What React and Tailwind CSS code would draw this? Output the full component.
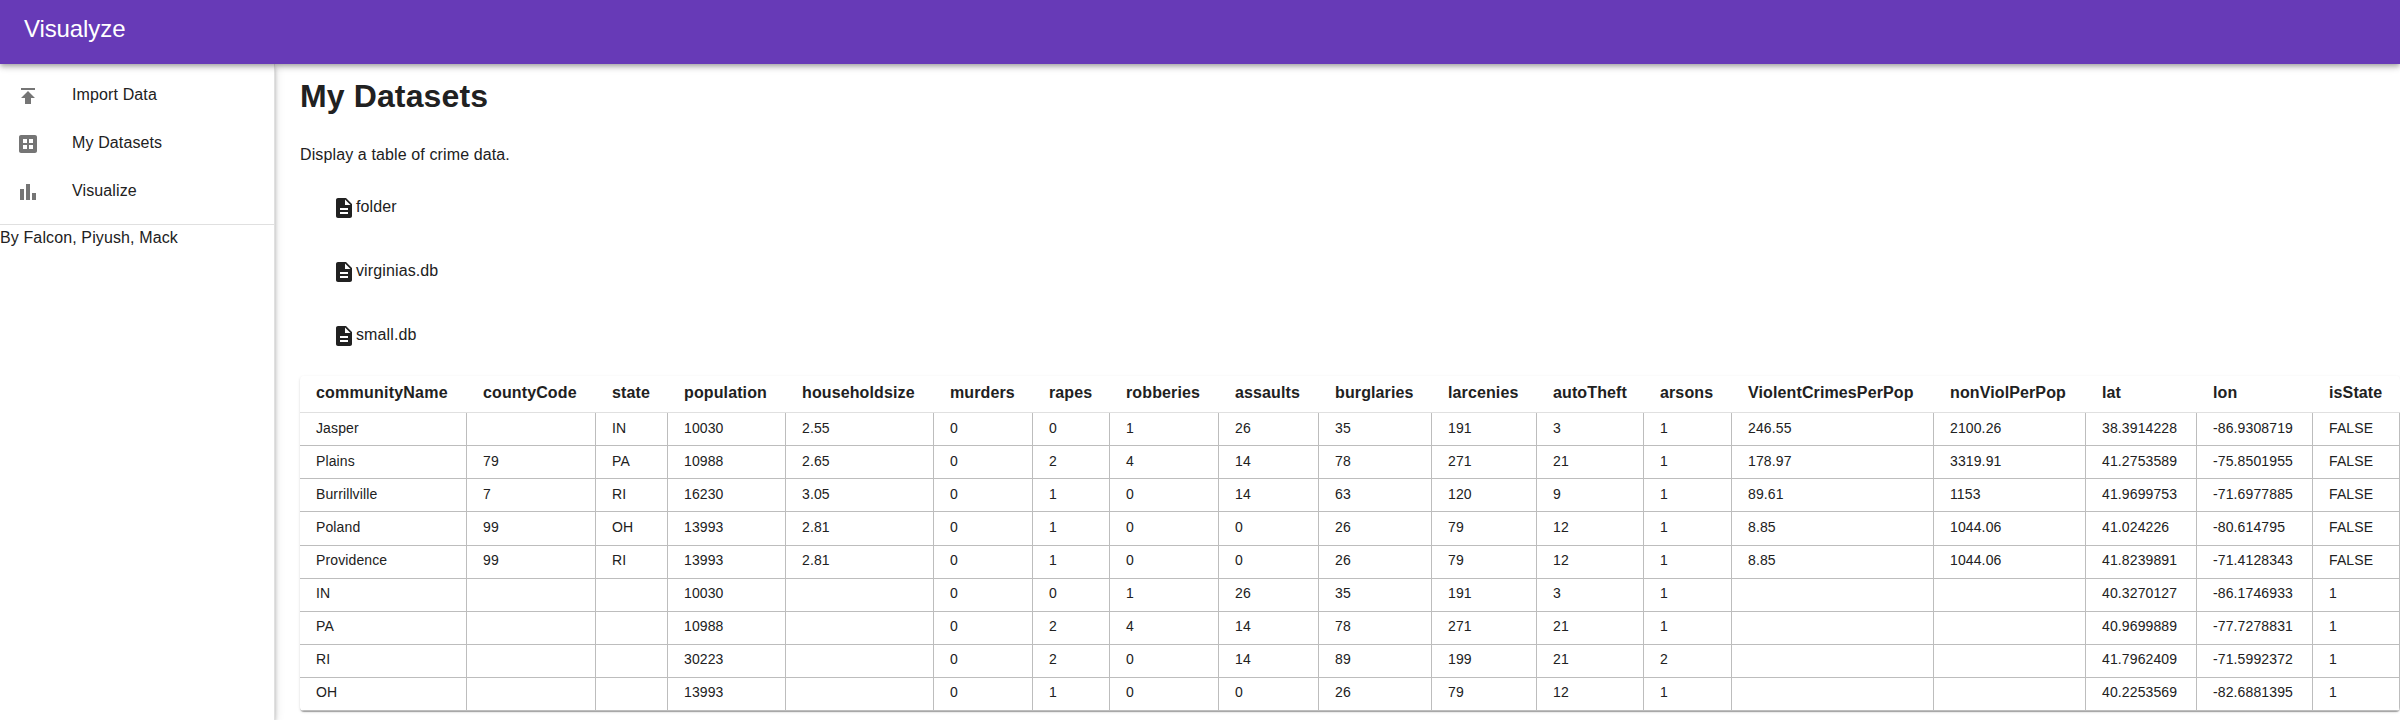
const ICONS = {
  publish: "M5 4v2h14V4H5zm0 10h4v6h6v-6h4l-7-7-7 7z",
  dataset:
    "M19 3H5c-1.1 0-2 .9-2 2v14c0 1.1.9 2 2 2h14c1.1 0 2-.9 2-2V5c0-1.1-.9-2-2-2zm-8 14H7v-4h4v4zm0-6H7V7h4v4zm6 6h-4v-4h4v4zm0-6h-4V7h4v4z",
  bars: "M4 9h4v11H4zM16 13h4v7h-4zM10 4h4v16h-4z",
  file: "M14 2H6c-1.1 0-1.99.9-1.99 2L4 20c0 1.1.89 2 1.99 2H18c1.1 0 2-.9 2-2V8l-6-6zm2 16H8v-2h8v2zm0-4H8v-2h8v2zm-3-5V3.5L18.5 9H13z",
};

function Icon({ name, className }) {
  return (
    <svg viewBox="0 0 24 24" fill="currentColor" className={className}>
      <path d={ICONS[name]} />
    </svg>
  );
}

const NAV = [
  ["publish", "Import Data"],
  ["dataset", "My Datasets"],
  ["bars", "Visualize"],
];

const FILES = ["folder", "virginias.db", "small.db"];

const COLUMNS = [
  ["communityName", 167],
  ["countyCode", 129],
  ["state", 72],
  ["population", 118],
  ["householdsize", 148],
  ["murders", 99],
  ["rapes", 77],
  ["robberies", 109],
  ["assaults", 100],
  ["burglaries", 113],
  ["larcenies", 105],
  ["autoTheft", 107],
  ["arsons", 88],
  ["ViolentCrimesPerPop", 202],
  ["nonViolPerPop", 152],
  ["lat", 111],
  ["lon", 116],
  ["isState", 87],
];

const ROWS = [
  ["Jasper", "", "IN", "10030", "2.55", "0", "0", "1", "26", "35", "191", "3", "1", "246.55", "2100.26", "38.3914228", "-86.9308719", "FALSE"],
  ["Plains", "79", "PA", "10988", "2.65", "0", "2", "4", "14", "78", "271", "21", "1", "178.97", "3319.91", "41.2753589", "-75.8501955", "FALSE"],
  ["Burrillville", "7", "RI", "16230", "3.05", "0", "1", "0", "14", "63", "120", "9", "1", "89.61", "1153", "41.9699753", "-71.6977885", "FALSE"],
  ["Poland", "99", "OH", "13993", "2.81", "0", "1", "0", "0", "26", "79", "12", "1", "8.85", "1044.06", "41.024226", "-80.614795", "FALSE"],
  ["Providence", "99", "RI", "13993", "2.81", "0", "1", "0", "0", "26", "79", "12", "1", "8.85", "1044.06", "41.8239891", "-71.4128343", "FALSE"],
  ["IN", "", "", "10030", "", "0", "0", "1", "26", "35", "191", "3", "1", "", "", "40.3270127", "-86.1746933", "1"],
  ["PA", "", "", "10988", "", "0", "2", "4", "14", "78", "271", "21", "1", "", "", "40.9699889", "-77.7278831", "1"],
  ["RI", "", "", "30223", "", "0", "2", "0", "14", "89", "199", "21", "2", "", "", "41.7962409", "-71.5992372", "1"],
  ["OH", "", "", "13993", "", "0", "1", "0", "0", "26", "79", "12", "1", "", "", "40.2253569", "-82.6881395", "1"],
];

export default function App() {
  return (
    <div className="flex h-[720px] w-[2400px] flex-col overflow-hidden bg-white font-['Nimbus_Sans','Liberation_Sans',sans-serif] text-base leading-6 tracking-[0.12px] text-[#212121]">
      <header className="z-20 flex h-16 shrink-0 items-center bg-[#673ab7] px-6 shadow-[0_2px_4px_-1px_rgba(0,0,0,0.2),0_4px_5px_0_rgba(0,0,0,0.14),0_1px_10px_0_rgba(0,0,0,0.12)]">
        <span className="-mt-1.5 text-2xl leading-8 tracking-[-0.1px] text-white">Visualyze</span>
      </header>
      <div className="flex min-h-0 flex-1">
        <nav className="z-10 flex w-[275px] shrink-0 flex-col border-r border-[#e0e0e0] bg-white shadow-[0_2px_4px_-1px_rgba(0,0,0,0.2),0_4px_5px_0_rgba(0,0,0,0.14),0_1px_10px_0_rgba(0,0,0,0.12)]">
          <ul className="pt-2">
            {NAV.map(([icon, label]) => (
              <li key={label} className="flex h-12 items-center gap-8 pl-4">
                <Icon name={icon} className="size-6 text-[#757575]" />
                <span className="-mt-0.5">{label}</span>
              </li>
            ))}
          </ul>
          <div className="mt-2 border-t border-[#e0e0e0] pt-px">By Falcon, Piyush, Mack</div>
        </nav>
        <main className="flex w-[2125px] flex-col pl-[25px]">
          <h1 className="mt-4 text-[32px] leading-8 font-bold">My Datasets</h1>
          <p className="mt-[31px]">Display a table of crime data.</p>
          <ul className="mt-[7px] pl-8">
            {FILES.map((f) => (
              <li key={f} className="flex h-16 items-start pt-[22px]">
                <Icon name="file" className="size-6" />
                <span className="-mt-px">{f}</span>
              </li>
            ))}
          </ul>
          <div className="mt-2.5 w-[2100px] overflow-hidden rounded shadow-[0_2px_1px_-1px_rgba(0,0,0,0.2),0_1px_1px_0_rgba(0,0,0,0.14),0_1px_3px_0_rgba(0,0,0,0.12)]">
            <table className="w-[2100px] table-fixed border-separate border-spacing-0">
              <colgroup>
                {COLUMNS.map(([name, width]) => (
                  <col key={name} style={{ width }} />
                ))}
              </colgroup>
              <thead>
                <tr className="h-[37px]">
                  {COLUMNS.map(([name]) => (
                    <th
                      key={name}
                      className="border-b border-[#e0e0e0] px-4 pb-0.5 text-left leading-6 font-bold first:tracking-[0.22px]"
                    >
                      {name}
                    </th>
                  ))}
                </tr>
              </thead>
              <tbody className="text-sm leading-5">
                {/* The rows total 298px, so the fourth takes the spare pixel. */}
                {ROWS.map((row, r) => (
                  <tr key={row[0]} className={r === 3 ? "h-[34px]" : "h-[33px]"}>
                    {row.map((v, i) => (
                      <td
                        key={i}
                        className={`border-r border-b border-[#bdbdbd] px-4 align-top ${r <= 3 ? "pt-[5px]" : "pt-1"}`}
                      >
                        {v}
                      </td>
                    ))}
                  </tr>
                ))}
              </tbody>
            </table>
          </div>
        </main>
      </div>
    </div>
  );
}
